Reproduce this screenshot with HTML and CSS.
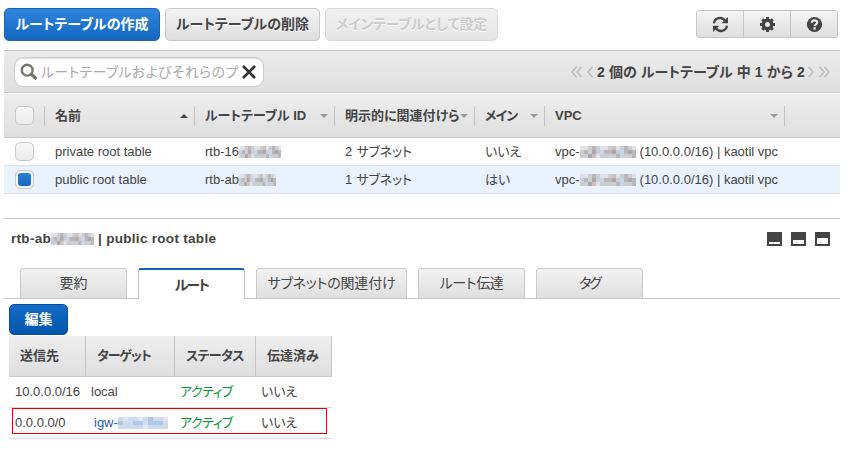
FILE: index.html
```html
<!DOCTYPE html>
<html lang="ja">
<head>
<meta charset="utf-8">
<title>ルートテーブル</title>
<link rel="stylesheet" href="styles.css">
</head>
<body>
<svg class="defs" width="0" height="0" aria-hidden="true">
  <symbol id="mosaic" viewBox="0 0 56 12" preserveAspectRatio="none">
    <rect width="56" height="12" fill="#cdced2"/>
    <path fill="#b8b8bc" d="M4 4h4v4h-4zM12 0h4v8h-4zM24 4h8v4h-8zM36 8h4v4h-4zM44 0h4v8h-4zM52 4h4v8h-4z"/>
    <path fill="#aaa8ab" d="M8 8h4v4h-4zM12 4h4v4h-4zM32 4h4v4h-4zM48 4h4v4h-4z"/>
    <path fill="#e0e2e7" d="M0 0h8v4h-8zM20 0h8v4h-8zM16 8h4v4h-4zM36 0h4v4h-4zM52 0h4v4h-4z"/>
    <path fill="#c9d6e8" d="M20 4h4v4h-4zM40 4h4v8h-4z"/>
    <path fill="#cfc0bf" d="M12 8h4v4h-4zM32 0h4v4h-4z"/>
  </symbol>
  <symbol id="mosaic-link" viewBox="0 0 50 12" preserveAspectRatio="none">
    <rect width="50" height="12" fill="#cddcee"/>
    <path fill="#b4c6df" d="M0 4h5v4h-5zM15 4h5v4h-5zM30 0h5v8h-5zM40 4h5v4h-5z"/>
    <path fill="#dfe8f4" d="M5 0h5v4h-5zM20 0h5v4h-5zM25 8h5v4h-5zM45 0h5v4h-5z"/>
    <path fill="#a9cbe8" d="M20 4h5v4h-5zM35 4h5v4h-5z"/>
  </symbol>
</svg>
<main class="console">
  <div class="toolbar">
    <button class="btn primary create"><span class="t-create">ルートテーブルの作成</span></button>
    <button class="btn delete"><span class="t-delete">ルートテーブルの削除</span></button>
    <button class="btn disabled setmain"><span class="t-setmain">メインテーブルとして設定</span></button>
    <div class="icon-group">
      <span><svg width="17" height="17" viewBox="0 0 17 17"><g fill="none" stroke="#444" stroke-width="2.3"><path d="M2 7.3A6 6 0 0 1 13 4.8M15 9.7A6 6 0 0 1 4 12.2"/></g><path fill="#444" d="M16 1v6.3H9.7zM1 16V9.7h6.3z"/></svg></span>
      <span><svg width="17" height="17" viewBox="0 0 17 17"><circle cx="8.5" cy="8.5" r="4.2" fill="none" stroke="#444" stroke-width="3.4"/><path stroke="#444" stroke-width="3" d="M8.5 1v3M8.5 13v3M1 8.5h3M13 8.5h3M3.2 3.2l2 2M11.8 11.8l2 2M3.2 13.8l2-2M11.8 5.2l2-2"/></svg></span>
      <span><svg width="17" height="17" viewBox="0 0 17 17"><circle cx="8.5" cy="8.5" r="7.6" fill="#444"/><path fill="none" stroke="#eee" stroke-width="2.2" d="M5.8 6.8C5.9 3.6 11.2 3.6 11.2 6.6C11.2 8.3 8.6 8.3 8.6 10.3"/><path fill="#eee" d="M7.4 11.4h2.4v2.2H7.4z"/></svg></span>
    </div>
  </div>

  <div class="filter">
    <div class="search">
      <svg width="18" height="18" viewBox="0 0 18 18"><circle cx="7.2" cy="7.2" r="5.4" fill="none" stroke="#76766e" stroke-width="2.4"/><path stroke="#76766e" stroke-width="3.2" d="M11 11l5.5 5"/></svg>
      <span class="placeholder"><span class="t-search">ルートテーブルおよびそれらのプ</span></span>
      <svg class="clear" width="14" height="14" viewBox="0 0 14 14"><path stroke="#333" stroke-width="2.6" d="M1 1l12 12M13 1L1 13"/></svg>
    </div>
    <div class="pager">
      <svg width="23" height="12" viewBox="0 0 23 12"><path d="M5.500 .8L1 6l4.500 5.200M10.500 .8L6 6l4.500 5.200M21.500 .8L17 6l4.500 5.200"/></svg>
      <span class="t-page">2 個の ルートテーブル 中 1 から 2</span>
      <svg width="23" height="12" viewBox="0 0 23 12"><path d="M1.500 .8L6 6l-4.500 5.200M12.500 .8L17 6l-4.500 5.200M17.500 .8L22 6l-4.500 5.200"/></svg>
    </div>
  </div>

  <div class="row head">
    <div class="cell"><i class="check"></i></div>
    <div class="cell"><span class="t-name">名前</span><i class="caret up"></i></div>
    <div class="cell"><span class="t-id">ルートテーブル ID</span><i class="caret"></i></div>
    <div class="cell"><span class="t-assoc">明示的に関連付けら</span><i class="caret"></i></div>
    <div class="cell"><span class="t-main">メイン</span><i class="caret"></i></div>
    <div class="cell"><span class="t-vpc">VPC</span><i class="caret"></i></div>
  </div>
  <div class="row">
    <div class="cell"><i class="check"></i></div>
    <div class="cell"><span class="t-private">private root table</span></div>
    <div class="cell">rtb-16<svg class="mask m1"><use href="#mosaic"/></svg></div>
    <div class="cell"><span class="t-subnet">2 サブネット</span></div>
    <div class="cell"><span class="t-no">いいえ</span></div>
    <div class="cell">vpc-<svg class="mask m2"><use href="#mosaic"/></svg><span class="t-cidr">(10.0.0.0/16) | kaotil vpc</span></div>
  </div>
  <div class="row selected">
    <div class="cell"><i class="check on"></i></div>
    <div class="cell"><span class="t-public">public root table</span></div>
    <div class="cell">rtb-ab<svg class="mask m3"><use href="#mosaic"/></svg></div>
    <div class="cell"><span class="t-subnet">1 サブネット</span></div>
    <div class="cell"><span class="t-yes">はい</span></div>
    <div class="cell">vpc-<svg class="mask m2"><use href="#mosaic"/></svg><span class="t-cidr">(10.0.0.0/16) | kaotil vpc</span></div>
  </div>

  <section class="details">
    <header class="title">
      <span class="t-title">rtb-ab</span><svg class="mask m4"><use href="#mosaic"/></svg><span class="t-title">| public root table</span>
      <div class="sizes"><i class="low"></i><i class="mid"></i><i class="high"></i></div>
    </header>
    <nav class="tabs">
      <a class="tab"><span class="t-summary">要約</span></a>
      <a class="tab active"><span class="t-route">ルート</span></a>
      <a class="tab wide"><span class="t-subs">サブネットの関連付け</span></a>
      <a class="tab"><span class="t-prop">ルート伝達</span></a>
      <a class="tab"><span class="t-tag">タグ</span></a>
    </nav>
    <button class="btn edit"><span class="t-edit">編集</span></button>
    <div class="routes">
      <div class="rrow rhead">
        <div><span class="t-dest">送信先</span></div><div><span class="t-target">ターゲット</span></div><div><span class="t-status">ステータス</span></div><div><span class="t-done">伝達済み</span></div>
      </div>
      <div class="rrow">
        <div><span class="t-net">10.0.0.0/16</span></div><div><span class="t-local">local</span></div><div class="ok"><span class="t-active">アクティブ</span></div><div><span class="t-no">いいえ</span></div>
      </div>
      <div class="rrow marked">
        <div>0.0.0.0/0</div><div class="link">igw-<svg class="mask m5"><use href="#mosaic-link"/></svg></div><div class="ok"><span class="t-active">アクティブ</span></div><div><span class="t-no">いいえ</span></div>
      </div>
    </div>
  </section>
</main>
</body>
</html>
```
FILE: styles.css
```css
*, *::before, *::after { box-sizing: border-box; }
body {
  margin: 0;
  background: #fff;
  color: #444;
  font: 13px/18px "Liberation Sans", "Noto Sans CJK JP", sans-serif;
  font-feature-settings: "palt";
}
.defs { position: absolute; }
.console { width: 836px; margin-left: 4px; padding-top: 8px; }
.toolbar { display: flex; gap: 5px; height: 42px; }
.btn {
  height: 33px;
  padding: 0 0 2px;
  border: 1px solid #c6c6c6;
  border-radius: 5px;
  background: linear-gradient(#f4f4f4, #dfdfdf);
  color: #444;
  font: inherit;
  font-size: 14px;
  font-weight: bold;
  white-space: nowrap;
  text-shadow: 0 1px 0 #fff;
}
.create { width: 156px; }
.delete { width: 155px; }
.setmain { width: 173px; }
.primary {
  border-color: #1c63b5;
  background: linear-gradient(#2f86dc, #1266be);
  color: #fff;
  text-shadow: none;
}
.disabled { border-color: #dadada; background: linear-gradient(#f2f2f2, #e5e5e5); color: #ccc; }
.icon-group {
  display: flex;
  width: 142px;
  height: 28px;
  margin: 2px 2px 0 auto;
  border: 1px solid #c6c6c6;
  border-radius: 3px;
  background: linear-gradient(#f4f4f4, #dfdfdf);
}
.icon-group span { flex: 1; display: grid; place-items: center; }
.icon-group span + span { border-left: 1px solid #c6c6c6; }

.filter {
  display: flex;
  align-items: center;
  height: 43px;
  padding: 0 10px;
  border: solid #c8c8c8;
  border-width: 1px 0;
  background: linear-gradient(#ececec, #dfdfdf);
}
.search {
  display: flex;
  align-items: center;
  width: 250px;
  height: 30px;
  padding: 0 7px 0 5px;
  border: 1px solid #ccc;
  border-radius: 9px;
  background: #fff;
  box-shadow: inset 0 1px 1px #ddd;
}
.placeholder { width: 199px; margin-left: 3px; overflow: hidden; white-space: nowrap; color: #aaa; font-size: 14px; }
.search svg { flex: none; }
.clear { margin-left: 2px; }
.pager { display: flex; align-items: center; margin-left: auto; font-size: 14px; font-weight: bold; white-space: nowrap; }
.pager path { fill: none; stroke: #bdbdbd; stroke-width: 1.6; }
.t-page { width: 208px; margin: 0 2px 0 3px; }

.row {
  display: grid;
  grid-template-columns: 41px 150px 140px 140px 70px 240px;
  height: 28px;
  border-bottom: 1px solid #dcdfe6;
}
.row .cell { display: flex; align-items: center; padding-left: 10px; white-space: nowrap; overflow: hidden; }
.row .cell:first-child { padding-left: 11px; }
.selected { background: #eaf2fe; }
.head {
  height: 44px;
  margin-top: 1px;
  align-items: center;
  border-color: #c8c8c8;
  background: linear-gradient(#eee, #dfdfdf);
  font-weight: bold;
}
.head .cell { height: 20px; border-right: 1px solid #c4c4c4; padding-right: 6px; }
.check {
  flex: none;
  width: 19px;
  height: 19px;
  border: 1px solid #c8c8c8;
  border-radius: 5px;
  background: linear-gradient(#f7f7f7, #ececec);
}
.check.on { padding: 2px; background: #f4f4f4; }
.check.on::before { content: ""; display: block; height: 13px; border-radius: 3px; background: linear-gradient(#2e83d8, #1266be); }
.caret { flex: none; margin-left: auto; border: solid transparent; border-width: 4px 4px 0; border-top-color: #999; }
.caret.up { border-width: 0 4px 4px; border-bottom-color: #444; }

.mask { flex: none; height: 12px; }
.m1 { width: 42px; }
.m2 { width: 56px; margin-right: 4px; }
.m3 { width: 37px; }
.m4 { width: 43px; margin-right: 4px; }
.m5 { width: 50px; }

.details { margin-top: 24px; border-top: 1px solid #c8c8c8; }
.title { display: flex; align-items: center; height: 39px; padding: 0 10px 0 7px; font-weight: bold; }
.sizes { display: flex; gap: 9px; margin-left: auto; }
.sizes i { width: 15px; height: 14px; border: 2px solid #444; background: #fff; }
.sizes .low { border-top-width: 10px; }
.sizes .mid { border-top-width: 8px; }
.sizes .high { border-top-width: 6px; }

.tabs { display: flex; gap: 11px; margin-top: 10px; height: 31px; padding-left: 16px; box-shadow: inset 0 -1px #c8c8c8; }
.tab {
  display: grid;
  place-items: center;
  width: 107px;
  padding-bottom: 1px;
  border: 1px solid #c8c8c8;
  border-radius: 3px 3px 0 0;
  background: linear-gradient(#f3f3f3, #dfdfdf);
  font-size: 14px;
  white-space: nowrap;
}
.tab.wide { width: 151px; }
.tab.active { padding: 0; border-top: 2px solid #1464ba; border-bottom: 0; background: #fff; font-weight: bold; }
.edit {
  display: block;
  width: 59px;
  height: 31px;
  margin: 5px 0 1px 5px;
  border-color: #05509f;
  background: linear-gradient(#146bc5, #0055ac);
  color: #fff;
  text-shadow: none;
}
.routes { width: 323px; margin-left: 5px; }
.rrow { display: grid; grid-template-columns: 77px 89px 81px 76px; height: 31px; border-bottom: 1px solid #dcdcdc; }
.rrow div { display: flex; align-items: center; padding-left: 5px; white-space: nowrap; }
.rrow div:first-child { padding-left: 6px; }
.rhead { height: 41px; border-color: #c8c8c8; background: linear-gradient(#eee, #dfdfdf); font-weight: bold; }
.rhead div, .rhead div:first-child { padding-left: 11px; border-right: 1px solid #c4c4c4; }
.marked { position: relative; }
.marked::after { content: ""; position: absolute; left: 3px; top: 0; width: 315px; height: 26px; border: 1px solid #e00; }
.rrow .link { padding-left: 8px; color: #1c5fb0; }
.ok { color: #093; }

/* Tracking per label */
.t-setmain { letter-spacing: -.2px; }
.t-search { letter-spacing: .3px; }
.t-page { letter-spacing: .1px; }
.t-title { font-size: 13.500px; letter-spacing: .3px; }
.t-subs { letter-spacing: -.2px; }
.t-prop { letter-spacing: -.4px; }
.t-tag { letter-spacing: -2px; }
.t-route { letter-spacing: -1.800px; }
.t-main, .t-target { letter-spacing: -1px; }
.t-subnet { letter-spacing: -.2px; word-spacing: 1px; }
.t-active, .t-status { letter-spacing: -.6px; }
```
